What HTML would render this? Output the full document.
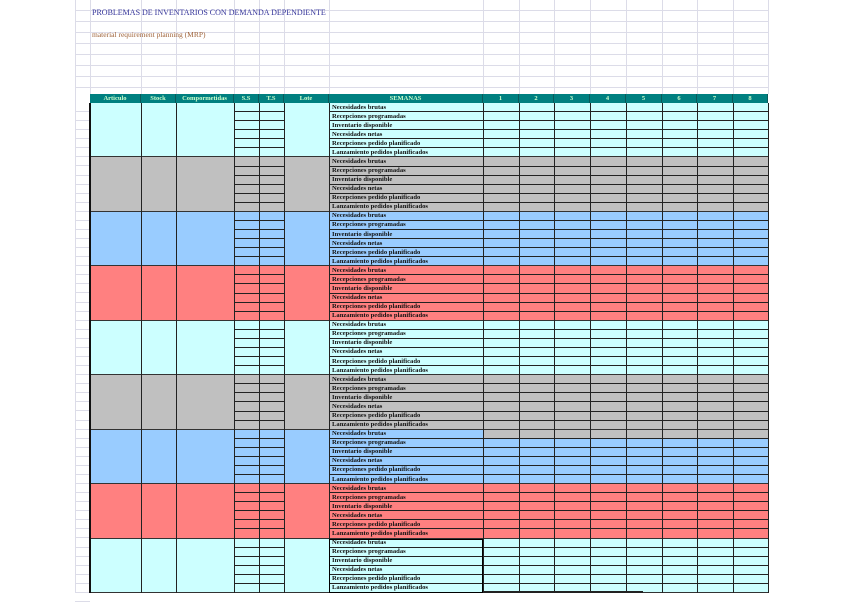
<!DOCTYPE html>
<html><head><meta charset="utf-8"><style>
body{margin:0;width:848px;height:603px;background:#fff;position:relative;overflow:hidden;font-family:"Liberation Serif",serif}
.a{position:absolute}
.grid{left:75px;top:0;width:693px;height:94px;
background-image:repeating-linear-gradient(to bottom,transparent 0 10px,#dcdce8 10px 11px);}
.vl{position:absolute;width:1px;background:#dcdce8}
.t{font-size:8px;white-space:nowrap}
.h{background:#008080;color:#ccffcc;font-weight:bold;font-size:6.5px;text-align:center;line-height:9px;height:9px;top:94px;border-right:1px solid #0a5a5a;box-sizing:border-box}
.g{position:absolute;left:90px;width:678px}
.lbl{position:absolute;left:332px;font-size:6.6px;font-weight:bold;color:#111;line-height:9px;white-space:nowrap}
</style></head><body>
<div class="a grid"></div>
<div id="v"></div>
<div class="a t" style="left:92px;top:8px;color:#333399">PROBLEMAS DE INVENTARIOS CON DEMANDA DEPENDIENTE</div>
<div class="a t" style="left:92px;top:30px;color:#a0643a;font-size:7.5px">material requirement planning (MRP)</div>
<div id="c"></div>
<script>
(function(){
var cols=[90,141,176,234,259,284,329,483,519,554,590,626,662,697,733,768];
var v='';
[75,90,141,176,234,259,284,329,483,519,554,590,626,662,697,733,768].forEach(function(x){v+='<div class="vl" style="left:'+x+'px;top:0;height:94px"></div>';});
for(var y=103;y<593;y+=9.074)v+='<div class="a" style="left:75px;width:15px;top:'+(y+8)+'px;height:1px;background:#dcdce8"></div>';
v+='<div class="vl" style="left:75px;top:94px;height:499px"></div>';
document.getElementById('v').innerHTML=v;
var heads=['Articulo','Stock','Compormetidas','S.S','T.S','Lote','SEMANAS','1','2','3','4','5','6','7','8'];
var h='';
for(var i=0;i<15;i++)h+='<div class="a h" style="left:'+cols[i]+'px;width:'+(cols[i+1]-cols[i])+'px">'+heads[i]+'</div>';
var colors=['#ccffff','#c0c0c0','#99ccff','#ff8080','#ccffff','#c0c0c0','#99ccff','#ff8080','#ccffff'];
var labels=['Necesidades brutas','Recepciones programadas','Inventario disponible','Necesidades netas','Recepciones pedido planificado','Lanzamiento pedidos planificados'];
var R=9.074;
for(var g=0;g<9;g++){
 var gt=103+g*6*R;
 h+='<div class="g" style="top:'+gt+'px;height:'+(6*R)+'px;background:'+colors[g]+'"></div>';
 if(g==6)h+='<div class="a" style="left:483px;width:285px;top:'+gt+'px;height:'+R+'px;background:#c0c0c0"></div>';
 for(var r=0;r<6;r++){
  var yy=gt+r*R;
  h+='<div class="a" style="left:234px;width:50px;top:'+(yy+R-1)+'px;height:1px;background:#222"></div>';
  h+='<div class="a" style="left:329px;width:439px;top:'+(yy+R-1)+'px;height:1px;background:#222"></div>';
  h+='<div class="lbl" style="top:'+(yy-0.5)+'px">'+labels[r]+'</div>';
 }
 h+='<div class="a" style="left:90px;width:678px;top:'+(gt+6*R-1)+'px;height:1px;background:#333"></div>';
}
for(var i=1;i<cols.length;i++)h+='<div class="a" style="left:'+cols[i]+'px;width:1px;top:103px;height:490px;background:#222"></div>';
h+='<div class="a" style="left:89px;width:2px;top:103px;height:490px;background:#111"></div>';
var lt=103+48*R;
h+='<div class="a" style="left:329px;width:154px;top:'+lt+'px;height:'+(6*R)+'px;border:1.5px solid #000;box-sizing:border-box"></div>';
h+='<div class="a" style="left:483px;width:160px;top:591px;height:2px;background:#222"></div>';
document.getElementById('c').innerHTML=h;
})();
</script>
</body></html>
